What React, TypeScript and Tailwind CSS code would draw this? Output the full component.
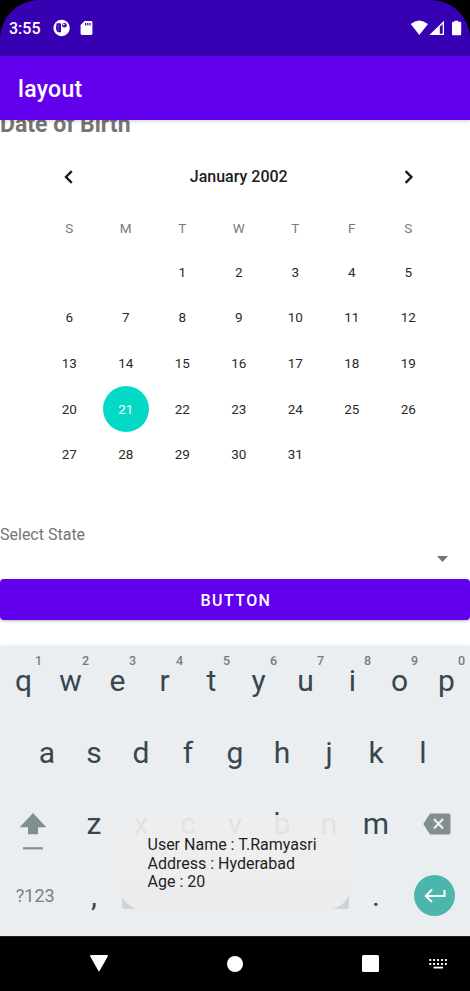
import React from "react";

const weekdays = ["S", "M", "T", "W", "T", "F", "S"];
const leadingBlanks = 2;
const selectedDay = 21;
const cells: (number | null)[] = [
  ...Array.from({ length: leadingBlanks }, () => null),
  ...Array.from({ length: 31 }, (_, i) => i + 1),
];

function StatusBar() {
  return (
    <div className="h-14 bg-black">
      <div className="flex h-14 items-center rounded-t-[39px] bg-[#3700b3] pl-[9px] text-white">
        <span className="w-[44px] pt-[2px] text-[16px] leading-none font-medium">3:55</span>
        <svg className="mr-[9px] h-[18px] w-[18px]" viewBox="0 0 18 18">
          <circle cx="8.6" cy="9" r="8.2" fill="#fff" />
          <path d="M3.6 4.2H8V13.2H5.2Q3 12.4 3 9Z" fill="#3700b3" />
          <path d="M4.8 5.4H6.2V11.8H4.8Z" fill="#fff" opacity="0.2" />
          <circle cx="11.4" cy="6.2" r="2.3" fill="#3700b3" />
          <circle cx="10.8" cy="5.6" r="0.9" fill="#fff" />
        </svg>
        <svg className="h-[16px] w-[13px]" viewBox="0 0 13 16">
          <path d="M4.5 1H11Q12.4 1 12.4 2.4V13.6Q12.4 15 11 15H2Q.6 15 .6 13.6V5Z" fill="#fff" />
          <path d="M5 3h1.2v2.4H5zM7.2 3h1.2v2.4H7.2zM9.4 3h1.2v2.4H9.4z" fill="#3700b3" />
        </svg>
        <svg className="ml-auto h-[16px] w-[60px]" viewBox="0 0 60 16">
          <path d="M.7 4Q9 -3 18 4L9.3 15Z" fill="#fff" />
          <path d="M19.3 15L34 .7V15Z" fill="#fff" />
          <path d="M29.8 6.7L32.7 3.9V13.7H29.8Z" fill="#3700b3" />
          <path d="M44.4 .7H48.2V1.8H50Q51.2 1.8 51.2 3V14Q51.2 15.2 50 15.2H43Q42 15.2 42 14V3Q42 1.8 43 1.8H44.4Z" fill="#fff" />
        </svg>
      </div>
    </div>
  );
}

function Calendar() {
  return (
    <section className="ml-[41px] w-[395.5px] pt-[16px]">
      <div className="flex h-12 items-center justify-between px-[22px] text-[#1d1d1d]">
        <svg className="mb-px h-4 w-3" viewBox="0 0 12 16" fill="none" stroke="currentColor" strokeWidth="2.4">
          <path d="M8.8 2.2L3 8L8.8 13.8" />
        </svg>
        <span className="text-[16px] font-medium">January 2002</span>
        <svg className="mb-px h-4 w-3" viewBox="0 0 12 16" fill="none" stroke="currentColor" strokeWidth="2.4">
          <path d="M2.6 2.2L8.4 8L2.6 13.8" />
        </svg>
      </div>
      <div className="mt-[4px] grid h-[46px] grid-cols-7 items-center text-center text-[13.5px] text-[#7a7a7a]">
        {weekdays.map((d, i) => (
          <span key={i}>{d}</span>
        ))}
      </div>
      <div className="-mt-[2px] grid auto-rows-[45.7px] grid-cols-7 place-items-center text-[13.5px] text-[#2a2a2a]">
        {cells.map((d, i) => (
          <span
            key={i}
            className={
              d === selectedDay
                ? "flex h-[45.6px] w-[45.6px] items-center justify-center rounded-full bg-[#03dac5] text-white"
                : "flex items-center justify-center"
            }
          >
            {d}
          </span>
        ))}
      </div>
    </section>
  );
}

function Key({ label, hint }: { label: string; hint?: string }) {
  return (
    <div className="relative flex h-full w-[47px] items-center justify-center">
      {label}
      {hint && (
        <span className="absolute top-[7px] left-[35px] text-[12.5px] leading-4 font-medium text-[#747d80]">{hint}</span>
      )}
    </div>
  );
}

function Toast() {
  return (
    <div className="absolute top-[169px] left-[119px] h-[94.5px] w-[232px] rounded-[25px] bg-[#eeeeee]/93 pt-[21px] pl-[28.5px] text-[16px] leading-[18.6px] text-[#1f1f1f]">
      <p>User Name : T.Ramyasri</p>
      <p>Address : Hyderabad</p>
      <p>Age : 20</p>
    </div>
  );
}

function Keyboard() {
  return (
    <section className="relative mt-[26px] h-[290px] bg-[#eaeef1] text-[30px] leading-none text-[#37474f] shadow-[0_-1px_3px_rgba(0,0,0,0.07)]">
      <div className="flex h-[70px]">
        {"qwertyuiop".split("").map((k, i) => (
          <Key key={k} label={k} hint={String((i + 1) % 10)} />
        ))}
      </div>
      <div className="flex h-[72px] justify-center pt-[2px]">
        {"asdfghjkl".split("").map((k) => (
          <Key key={k} label={k} />
        ))}
      </div>
      <div className="flex h-[72px]">
        <div className="flex w-[70.5px] items-center pl-[19px]">
          <svg className="mt-[14px] h-[40px] w-[28px]" viewBox="0 0 28 40">
            <path d="M14 2L27.3 16.3H19V23.3H9V16.3H.7Z" fill="#828e90" />
            <path d="M4 36.2H24V38.4H4Z" fill="#828e90" />
          </svg>
        </div>
        {"zxcvbnm".split("").map((k) => (
          <Key key={k} label={k} />
        ))}
        <div className="flex w-[70.5px] items-center pl-[23.5px]">
          <svg className="-mt-[1px] h-[22px] w-[28px]" viewBox="0 0 28 22">
            <path d="M7 .5H25.5Q27.5 .5 27.5 2.5V19.5Q27.5 21.5 25.5 21.5H7L.3 11Z" fill="#828e90" />
            <path d="M11 6L20 15.5M20 6L11 15.5" stroke="#eaeef1" strokeWidth="2.2" />
          </svg>
        </div>
      </div>
      <div className="flex h-[72px]">
        <div className="flex w-[70.5px] items-center justify-center text-[18px] text-[#74818a]">?123</div>
        <Key label="," />
        <div className="w-[235px] px-1 pt-[21px]">
          <div className="h-[28px] rounded-[3px] bg-[#cfd4d8]" />
        </div>
        <Key label="." />
        <div className="flex w-[70.5px] items-center justify-center pb-[2px]">
          <div className="flex h-[41px] w-[41px] items-center justify-center rounded-full bg-[#4db6ac]">
            <svg className="h-[16px] w-[22px]" viewBox="0 0 22 16" fill="none" stroke="#fff" strokeWidth="2.1">
              <path d="M20.5 3V9H2M8 2.5L1.8 9L8 15" />
            </svg>
          </div>
        </div>
      </div>
      <Toast />
    </section>
  );
}

function NavBar() {
  return (
    <nav className="flex h-[55px] items-center border-t border-[#222] bg-black pb-px">
      <svg className="ml-[89px] h-[18px] w-[20px]" viewBox="0 0 20 18">
        <path d="M1.8 .8H18.2L10 15.5Z" fill="#fff" stroke="#fff" strokeWidth="1.5" strokeLinejoin="round" />
      </svg>
      <span className="ml-[118px] h-4 w-4 rounded-full bg-white" />
      <span className="ml-[119px] h-[17px] w-[17px] rounded-[1.5px] bg-white" />
      <svg className="ml-[50px] h-[12px] w-[19px]" viewBox="0 0 19 12">
        <path d="M.3 2H18M.3 6H18" stroke="#fff" strokeWidth="1.8" strokeDasharray="1.9 2" />
        <path d="M4.5 9.6H14" stroke="#fff" strokeWidth="1.8" />
      </svg>
    </nav>
  );
}

export default function App() {
  return (
    <main className="h-[991px] w-[470px] overflow-hidden bg-white font-[Roboto,sans-serif]">
      <StatusBar />
      <header className="relative z-10 flex h-16 items-center bg-[#6200ee] pt-[5px] pl-[18px] text-[23px] font-medium tracking-[0.3px] text-white shadow-[0_1px_4px_rgba(0,0,0,0.2)]">
        layout
      </header>
      <h2 className="-mt-[10px] h-[31px] text-[23px] leading-[30px] font-bold text-[#757575]">Date of Birth</h2>
      <div className="-mt-[4px] h-[386px]">
        <Calendar />
      </div>
      <div className="h-[56px] text-[16px] text-[#757575]">
        <div className="leading-[23px]">Select State</div>
        <svg className="mt-[10px] ml-[437px] h-[6px] w-[11px]" viewBox="0 0 11 6">
          <path d="M0 0H11L5.5 6Z" fill="#757575" />
        </svg>
      </div>
      <button className="block h-[41px] w-full rounded-[4px] bg-[#6200ee] pt-[2px] pl-[2px] text-[16px] font-medium tracking-[1.4px] text-white shadow-[0_1px_3px_rgba(0,0,0,0.3)]">
        BUTTON
      </button>
      <Keyboard />
      <NavBar />
    </main>
  );
}
